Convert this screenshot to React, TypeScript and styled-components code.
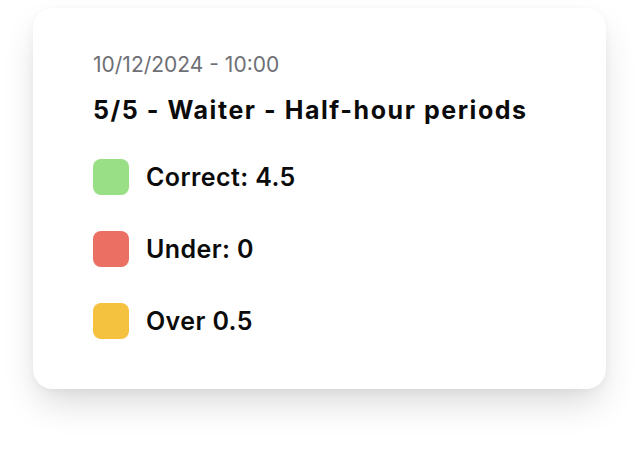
import styled, { createGlobalStyle } from "styled-components";

const GlobalStyle = createGlobalStyle`
  html, body {
    margin: 0;
    padding: 0;
    background: #ffffff;
  }
  body {
    font-family: "Inter", "Noto Sans", sans-serif;
  }
`;

const Page = styled.div`
  width: 639px;
  height: 450px;
  padding: 8px 0 0 33px;
  box-sizing: border-box;
`;

const Card = styled.div`
  width: 573px;
  height: 381px;
  box-sizing: border-box;
  padding: 45px 60px;
  background: #ffffff;
  border-radius: 20px;
  box-shadow: 0 18px 36px -6px rgba(0, 0, 0, 0.16), 0 2px 10px rgba(0, 0, 0, 0.04);
  display: flex;
  flex-direction: column;
`;

const DateText = styled.div`
  font-size: 21px;
  line-height: 24px;
  color: #6e7075;
  font-weight: 400;
`;

const Title = styled.div`
  margin-top: 19px;
  font-size: 25px;
  line-height: 28px;
  font-weight: 700;
  letter-spacing: 1.55px;
  color: #0b0b0b;
`;

const Legend = styled.ul`
  list-style: none;
  margin: 35px 0 0;
  padding: 0;
  display: flex;
  flex-direction: column;
  gap: 36px;
`;

const Row = styled.li`
  display: flex;
  align-items: center;
  gap: 17px;
  height: 36px;
`;

const Swatch = styled.span<{ $color: string }>`
  width: 36px;
  height: 36px;
  border-radius: 8px;
  background: ${({ $color }) => $color};
  flex-shrink: 0;
`;

const Label = styled.span`
  font-size: 25px;
  font-weight: 600;
  letter-spacing: 0.4px;
  color: #0b0b0b;
`;

const items = [
  { color: "#98df86", text: "Correct: 4.5" },
  { color: "#ec6f64", text: "Under: 0" },
  { color: "#f4c23f", text: "Over 0.5" },
];

export default function App() {
  return (
    <>
      <GlobalStyle />
      <Page>
        <Card>
          <DateText>10/12/2024 - 10:00</DateText>
          <Title>5/5 - Waiter - Half-hour periods</Title>
          <Legend>
            {items.map((item) => (
              <Row key={item.text}>
                <Swatch $color={item.color} />
                <Label>{item.text}</Label>
              </Row>
            ))}
          </Legend>
        </Card>
      </Page>
    </>
  );
}
